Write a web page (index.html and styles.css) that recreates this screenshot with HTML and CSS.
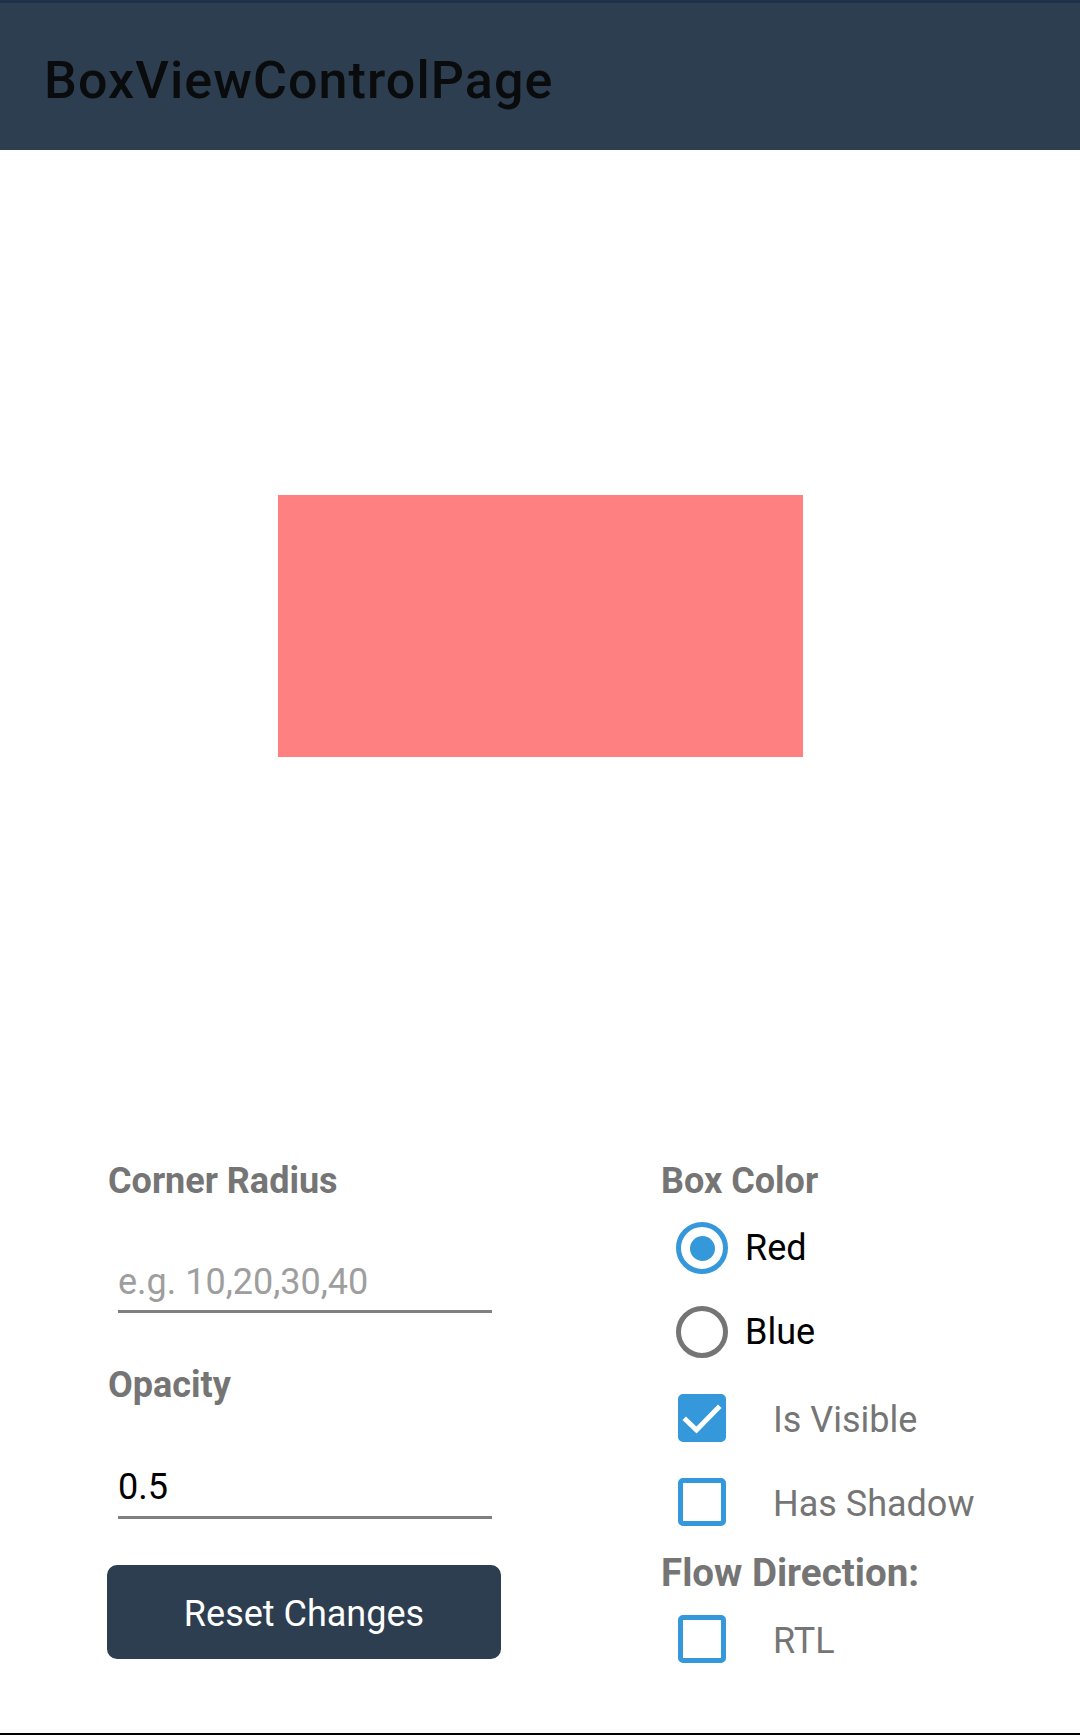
FILE: index.html
```html
<!DOCTYPE html>
<html>
<head>
<meta charset="utf-8">
<link rel="stylesheet" href="styles.css">
</head>
<body>
<div class="page">
  <header class="toolbar">
    <h1 class="title">BoxViewControlPage</h1>
  </header>
  <section class="stage">
    <div class="box"></div>
  </section>
  <section class="controls">
    <div class="col col-left">
      <div class="label">Corner Radius</div>
      <div class="entry entry-first"><span class="placeholder">e.g. 10,20,30,40</span></div>
      <div class="label label-opacity">Opacity</div>
      <div class="entry entry-second"><span class="value">0.5</span></div>
      <button class="btn">Reset Changes</button>
    </div>
    <div class="col col-right">
      <div class="label">Box Color</div>
      <div class="radio-row radio-first">
        <span class="radio checked"><span class="dot"></span></span>
        <span class="radio-text">Red</span>
      </div>
      <div class="radio-row radio-second">
        <span class="radio"></span>
        <span class="radio-text">Blue</span>
      </div>
      <div class="check-row check-first">
        <span class="check checked">
          <svg viewBox="0 0 48 48" width="48" height="48"><path d="M8 26 L18.5 36 L40 14" fill="none" stroke="#ffffff" stroke-width="5" stroke-linecap="square"/></svg>
        </span>
        <span class="check-text">Is Visible</span>
      </div>
      <div class="check-row check-second">
        <span class="check"></span>
        <span class="check-text">Has Shadow</span>
      </div>
      <div class="label label-flow">Flow Direction:</div>
      <div class="check-row check-rtl">
        <span class="check"></span>
        <span class="check-text">RTL</span>
      </div>
    </div>
  </section>
  <div class="spacer"></div>
  <div class="navbar"></div>
</div>
</body>
</html>
```
FILE: styles.css
```css
* { box-sizing: border-box; }
html, body { margin: 0; padding: 0; background: #ffffff; }
body { font-family: Roboto, "Noto Sans", sans-serif; }
.page { width: 1080px; height: 1735px; display: flex; flex-direction: column; }
.toolbar {
  height: 150px;
  background: #2d3e50;
  border-top: 3px solid #1d3248;
  padding-left: 44px;
  display: flex;
  align-items: flex-start;
}
.title {
  margin: 0;
  margin-top: 46px;
  font-size: 52px;
  line-height: 64px;
  font-weight: 500;
  color: #0a0b0c;
  letter-spacing: 1.1px;
}
.stage {
  height: 1009px;
  padding-top: 345px;
  display: flex;
  justify-content: center;
  align-items: flex-start;
}
.box { width: 525px; height: 262px; background: #ff8080; }
.controls { display: flex; }
.col { display: flex; flex-direction: column; }
.col-left { width: 661px; padding-left: 108px; }
.col-right { padding-left: 0; }
.label {
  font-size: 36px;
  line-height: 44px;
  font-weight: 700;
  color: #757575;
}
.entry {
  margin-left: 10px;
  width: 374px;
  font-size: 36px;
  line-height: 44px;
  padding-bottom: 6px;
  border-bottom: 3px solid #808080;
}
.entry-first { margin-top: 57px; }
.entry-second { margin-top: 58px; padding-bottom: 7px; }
.placeholder { color: #9e9e9e; }
.value { color: #000000; }
.label-opacity { margin-top: 50px; }
.btn {
  margin-top: 46px;
  width: 394px;
  height: 94px;
  border: none;
  border-radius: 10px;
  background: #2d3e50;
  color: #ffffff;
  font-family: Roboto, "Noto Sans", sans-serif;
  font-size: 36px;
  line-height: 44px;
  padding: 4px 0 0 0;
  margin-left: -1px;
}
.radio-row { display: flex; align-items: center; height: 52px; }
.radio-first { margin-top: 19px; }
.radio-second { margin-top: 32px; }
.radio {
  width: 52px; height: 52px;
  margin-left: 15px;
  border-radius: 50%;
  border: 5px solid #757575;
  display: flex; align-items: center; justify-content: center;
}
.radio.checked { border-color: #3498db; }
.dot { width: 25px; height: 25px; border-radius: 50%; background: #3498db; }
.radio-text {
  margin-left: 17px;
  font-size: 36px;
  line-height: 44px;
  color: #000000;
}
.check-row { display: flex; align-items: center; height: 48px; }
.check-first { margin-top: 36px; }
.check-second { margin-top: 36px; }
.check-rtl { margin-top: 20px; }
.check {
  width: 48px; height: 48px;
  margin-left: 17px;
  border: 5px solid #3498db;
  border-radius: 5px;
  display: block;
  position: relative;
}
.check.checked { background: #3498db; }
.check svg { position: absolute; left: -5px; top: -5px; }
.check-text {
  margin-left: 47px;
  font-size: 36px;
  line-height: 44px;
  padding-top: 3px;
  color: #757575;
}
.label-flow { margin-top: 25px; font-size: 38.5px; }
.spacer { flex: 1; }
.navbar { height: 2px; background: #000000; }
```
